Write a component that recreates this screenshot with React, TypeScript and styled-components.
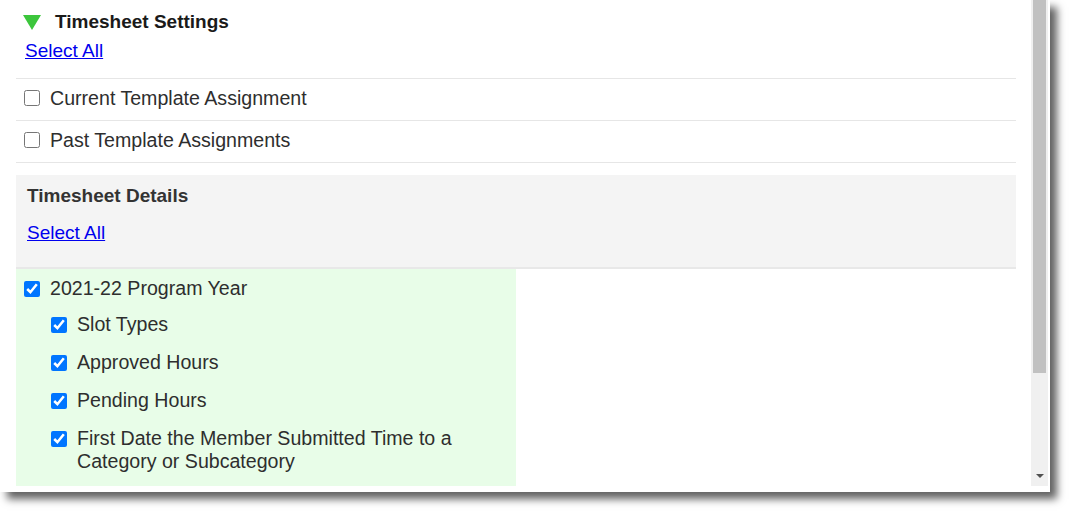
import React from 'react'
import styled, { createGlobalStyle } from 'styled-components';

const GlobalStyle = createGlobalStyle`
    html, body {
        margin: 0;
        padding: 0;
        background: #ffffff;
    }
    body {
        font-family: "Liberation Sans", Arial, sans-serif;
        color: #2e2e2e;
    }
`;

const Page = styled.div`
    width: 1074px;
    height: 516px;
    background: #ffffff;
`;

const Window = styled.div`
    width: 1050px;
    height: 492px;
    box-sizing: border-box;
    padding: 0 2px 6px 0;
    background: #ffffff;
    box-shadow: 7px 7px 8px rgba(0, 0, 0, 0.62);
    display: flex;
`;

const Viewport = styled.div`
    flex: 1;
    display: flex;
    overflow: hidden;
`;

const Content = styled.div`
    flex: 1;
    padding: 0 15px 0 16px;
    font-size: 19px;
    line-height: 23px;
`;

const ScrollTrack = styled.div`
    width: 17px;
    background: #f0f0f0;
    display: flex;
    flex-direction: column;
    align-items: center;
`;

const ScrollThumb = styled.div`
    width: 13px;
    height: 373px;
    background: #c1c1c1;
`;

const ScrollArrow = styled.div`
    margin-top: auto;
    margin-bottom: 8px;
    width: 0;
    height: 0;
    border-left: 4px solid transparent;
    border-right: 4px solid transparent;
    border-top: 4px solid #505050;
`;

const SectionHead = styled.div`
    padding: 11px 0 16px 7px;
`;

const TitleRow = styled.div`
    display: flex;
    align-items: center;
    gap: 14px;
    height: 22px;
`;

const Title = styled.span`
    font-weight: bold;
    color: #1a1a1a;
    line-height: 22px;
`;

const SelectLink = styled.a<{ $top: number; $left: number }>`
    display: inline-block;
    margin-top: ${p => p.$top}px;
    margin-left: ${p => p.$left}px;
    color: #0000ee;
    text-decoration: underline;
    line-height: 22px;
    cursor: pointer;
`;

const RowList = styled.div`
    border-top: 1px solid #e6e6e6;
`;

const Row = styled.label`
    height: 42px;
    box-sizing: border-box;
    border-bottom: 1px solid #e6e6e6;
    padding: 0 0 3px 8px;
    display: flex;
    align-items: center;
    gap: 10px;
    font-size: 19.6px;
`;

const Box = styled.input`
    width: 16px;
    height: 16px;
    margin: 0;
    flex: none;
    accent-color: #0075ff;
`;

const DetailsBox = styled.div`
    margin-top: 12px;
    background: #f4f4f4;
    border-bottom: 2px solid #e8e8e8;
    padding: 10px 0 23px 11px;
`;

const DetailsTitle = styled.div`
    font-weight: bold;
    color: #333333;
    line-height: 22px;
`;

const GreenGroup = styled.div`
    width: 500px;
    background: #e8fde8;
    padding: 8px 0 24px 8px;
    box-sizing: border-box;
`;

const Item = styled.label<{ $child?: boolean; $gap?: number }>`
    display: flex;
    align-items: flex-start;
    gap: 10px;
    margin-left: ${p => (p.$child ? 27 : 0)}px;
    margin-top: ${p => p.$gap ?? 0}px;
    max-width: 440px;
    font-size: 19.6px;

    input {
        margin-top: 4px;
    }
`;

const Arrow: React.FC = () => (
    <svg width="18" height="15" viewBox="0 0 18 15">
        <polygon points="0,0 18,0 9,15" fill="#3cc63c" />
    </svg>
);

const details = [
    'Slot Types',
    'Approved Hours',
    'Pending Hours',
    'First Date the Member Submitted Time to a Category or Subcategory',
];

export const App: React.FC = () => {
    return (
        <Page>
            <GlobalStyle />
            <Window>
                <Viewport>
                    <Content>
                        <SectionHead>
                            <TitleRow>
                                <Arrow />
                                <Title>Timesheet Settings</Title>
                            </TitleRow>
                            <SelectLink $top={7} $left={2}>Select All</SelectLink>
                        </SectionHead>

                        <RowList>
                            <Row>
                                <Box type='checkbox' />
                                Current Template Assignment
                            </Row>
                            <Row>
                                <Box type='checkbox' />
                                Past Template Assignments
                            </Row>
                        </RowList>

                        <DetailsBox>
                            <DetailsTitle>Timesheet Details</DetailsTitle>
                            <SelectLink $top={15} $left={0}>Select All</SelectLink>
                        </DetailsBox>

                        <GreenGroup>
                            <Item>
                                <Box type='checkbox' defaultChecked />
                                2021-22 Program Year
                            </Item>
                            {
                                details.map((text, index) => (
                                    <Item key={index} $child $gap={index === 0 ? 13 : 15}>
                                        <Box type='checkbox' defaultChecked />
                                        <span>{text}</span>
                                    </Item>
                                ))
                            }
                        </GreenGroup>
                    </Content>
                    <ScrollTrack>
                        <ScrollThumb />
                        <ScrollArrow />
                    </ScrollTrack>
                </Viewport>
            </Window>
        </Page>
    );
}

export default App
